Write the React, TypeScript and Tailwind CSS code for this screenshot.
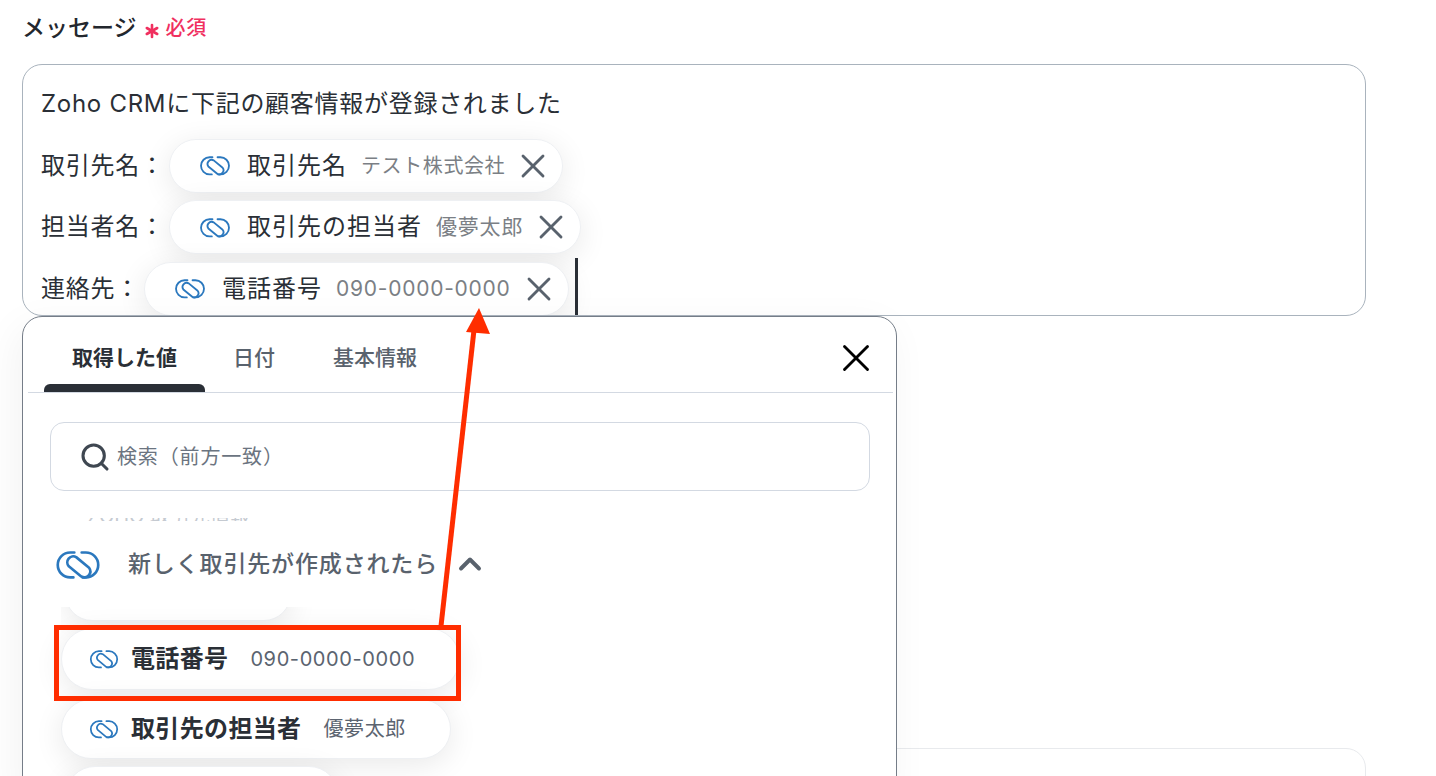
import { X, Search, ChevronUp, Asterisk } from "lucide-react";

function ZohoIcon({ className }: { className: string }) {
  return (
    <svg viewBox="8 12 50 33" fill="none" stroke="#2b78be" strokeWidth="2.9" strokeLinecap="round" strokeLinejoin="round" className={className}>
      <path d="M29 15.5 H24.5 A13.5 13.5 0 0 0 24.5 42.5 H28" />
      <path d="M37 15.5 H41.5 A13.5 13.5 0 0 1 41.5 42.5 H38" />
      <path d="M36.5 41.5 L23 30.5 A6.5 6.5 0 0 1 31 20.5 L45 32 A6.5 6.5 0 0 1 36.5 41.5" />
    </svg>
  );
}

function FieldChip({ name, value, valueClass }: { name: string; value: string; valueClass: string }) {
  return (
    <span className="flex h-[54px] items-center rounded-full border border-[#eef0f3] bg-white pl-[29px] pr-[9px] shadow-[0_6px_30px_rgba(0,0,0,0.09)]">
      <ZohoIcon className="h-[21px] w-[32px] shrink-0" />
      <span className="ml-[16px] text-[24px] tracking-[1px] text-[#2a2f36]">{name}</span>
      <span className={`ml-[14px] text-[#7b7f85] ${valueClass}`}>{value}</span>
      <X className="ml-[8px] h-[40px] w-[40px] text-[#59626d]" strokeWidth={1.7} />
    </span>
  );
}

function ListChip({ name, value, h }: { name: string; value: string; h: string }) {
  return (
    <div className={`flex w-fit items-center rounded-full border border-[#eef0f3] bg-white pl-[27px] pr-[44px] shadow-[0_6px_30px_rgba(0,0,0,0.09)] ${h}`}>
      <ZohoIcon className="h-[20px] w-[30px] shrink-0" />
      <span className="ml-[12px] text-[24px] font-bold tracking-[0.35px] text-[#2a2f36]">{name}</span>
      <span className="ml-[22px] text-[20px] tracking-[0.6px] text-[#5b6470]">{value}</span>
    </div>
  );
}

export default function App() {
  return (
    <div className="relative h-[776px] overflow-hidden bg-white font-['Inter','Noto_Sans_CJK_JP',sans-serif]">
      <div className="px-[22px] pt-[12px]">
        <div className="flex h-[32px] items-center">
          <span className="text-[23px] font-medium text-[#23272e]">メッセージ</span>
          <Asterisk className="ml-[3px] mt-[6px] h-[24px] w-[24px] text-[#f0305f]" strokeWidth={2.6} />
          <span className="ml-[2px] text-[20px] font-medium tracking-[0.6px] text-[#f0305f]">必須</span>
        </div>
        <div className="mt-[20px] flex h-[252px] w-[1344px] flex-col gap-[7.5px] overflow-hidden rounded-[20px] border border-[#a9b3bd] pl-[18px] pt-[12px] text-[24px] tracking-[0.72px] text-[#2a2f36]">
          <div className="flex h-[54px] shrink-0 items-center">Zoho CRMに下記の顧客情報が登録されました</div>
          <div className="flex h-[54px] shrink-0 items-center">
            <span className="w-[128px]">取引先名：</span>
            <FieldChip name="取引先名" value="テスト株式会社" valueClass="text-[20px] tracking-[0.6px]" />
          </div>
          <div className="flex h-[54px] shrink-0 items-center">
            <span className="w-[128px]">担当者名：</span>
            <FieldChip name="取引先の担当者" value="優夢太郎" valueClass="text-[21px] tracking-[0.8px]" />
          </div>
          <div className="flex h-[54px] shrink-0 items-center">
            <span className="w-[103px]">連絡先：</span>
            <FieldChip name="電話番号" value="090-0000-0000" valueClass="text-[21px] tracking-[0.75px]" />
            <span className="-mt-[4px] ml-[6px] h-[58px] w-[3px] shrink-0 bg-[#2a2f36]" />
          </div>
        </div>
        <div className="mt-[432px] h-[100px] w-[1344px] rounded-[20px] border border-[#e8eaed]" />
      </div>

      <div className="absolute left-[22px] top-[316px] h-[480px] w-[875px] rounded-t-[20px] border border-[#757d88] bg-white shadow-[-6px_10px_40px_rgba(0,0,0,0.05)]">
        <div className="ml-[5px] mr-[3px] flex h-[76px] items-center border-b border-[#d3d9e2] pl-[16px]">
          <div className="relative flex h-full items-center px-[28px] pt-[6px] text-[21px] font-bold text-[#2a2f36]">
            取得した値
            <span className="absolute bottom-0 left-0 right-0 h-[8px] rounded-t-[6px] bg-[#2a2f36]" />
          </div>
          <div className="flex h-full items-center px-[28px] pt-[6px] text-[21px] font-medium text-[#59626d]">日付</div>
          <div className="ml-[2px] flex h-full items-center px-[28px] pt-[6px] text-[21px] font-medium text-[#59626d]">基本情報</div>
          <X className="ml-auto mr-[14px] mt-[6px] h-[46px] w-[46px] text-black" strokeWidth={1.5} />
        </div>
        <div className="ml-[27px] mr-[26px] mt-[29px] flex h-[69px] items-center rounded-[14px] border border-[#d3d9e2] pl-[28px]">
          <Search className="h-[32px] w-[32px] text-[#3f4751]" strokeWidth={2.3} />
          <span className="ml-[6px] text-[20px] tracking-[0.85px] text-[#6b7480]">検索（前方一致）</span>
        </div>
        <div className="mt-[27px] h-[3px] overflow-hidden pl-[64px] text-[20px] leading-[10px] text-[#c5cad1]">
          <div className="-mt-[7px]">ZOHO 取引先情報</div>
        </div>
        <div className="flex h-[86px] items-center pl-[32px]">
          <ZohoIcon className="h-[33px] w-[46px] shrink-0" />
          <span className="ml-[27px] text-[23px] font-medium tracking-[0.85px] text-[#59626d]">新しく取引先が作成されたら</span>
          <ChevronUp className="ml-[14px] h-[36px] w-[36px] text-[#59626d]" strokeWidth={2.6} />
        </div>
        <div className="flex flex-col pl-[38px]">
          <div className="h-[40px] overflow-hidden px-[4px] pb-[20px]">
            <div className="-mt-[40px] h-[54px] w-[226px] rounded-full border border-[#eef0f3] bg-white shadow-[0_6px_30px_rgba(0,0,0,0.09)]" />
          </div>
          <div className="-mt-[19px] flex flex-col gap-[9px]">
            <ListChip name="電話番号" value="090-0000-0000" h="h-[62px]" />
            <ListChip name="取引先の担当者" value="優夢太郎" h="h-[60px]" />
            <div className="-mt-[2px] ml-[4px] h-[60px] w-[274px] rounded-full border border-[#eef0f3] bg-white shadow-[0_6px_30px_rgba(0,0,0,0.09)]" />
          </div>
        </div>
      </div>

      <div className="absolute left-[54px] top-[625px] h-[76px] w-[407px] border-[5px] border-[#ff2d00]" />
      <svg className="pointer-events-none absolute left-0 top-0 h-[776px] w-[1436px]" viewBox="0 0 1436 776" fill="none">
        <path d="M441 626 L474 330" stroke="#ff2d00" strokeWidth="5" />
        <path d="M479 308 L490 334 L466 332 Z" fill="#ff2d00" />
      </svg>
    </div>
  );
}
